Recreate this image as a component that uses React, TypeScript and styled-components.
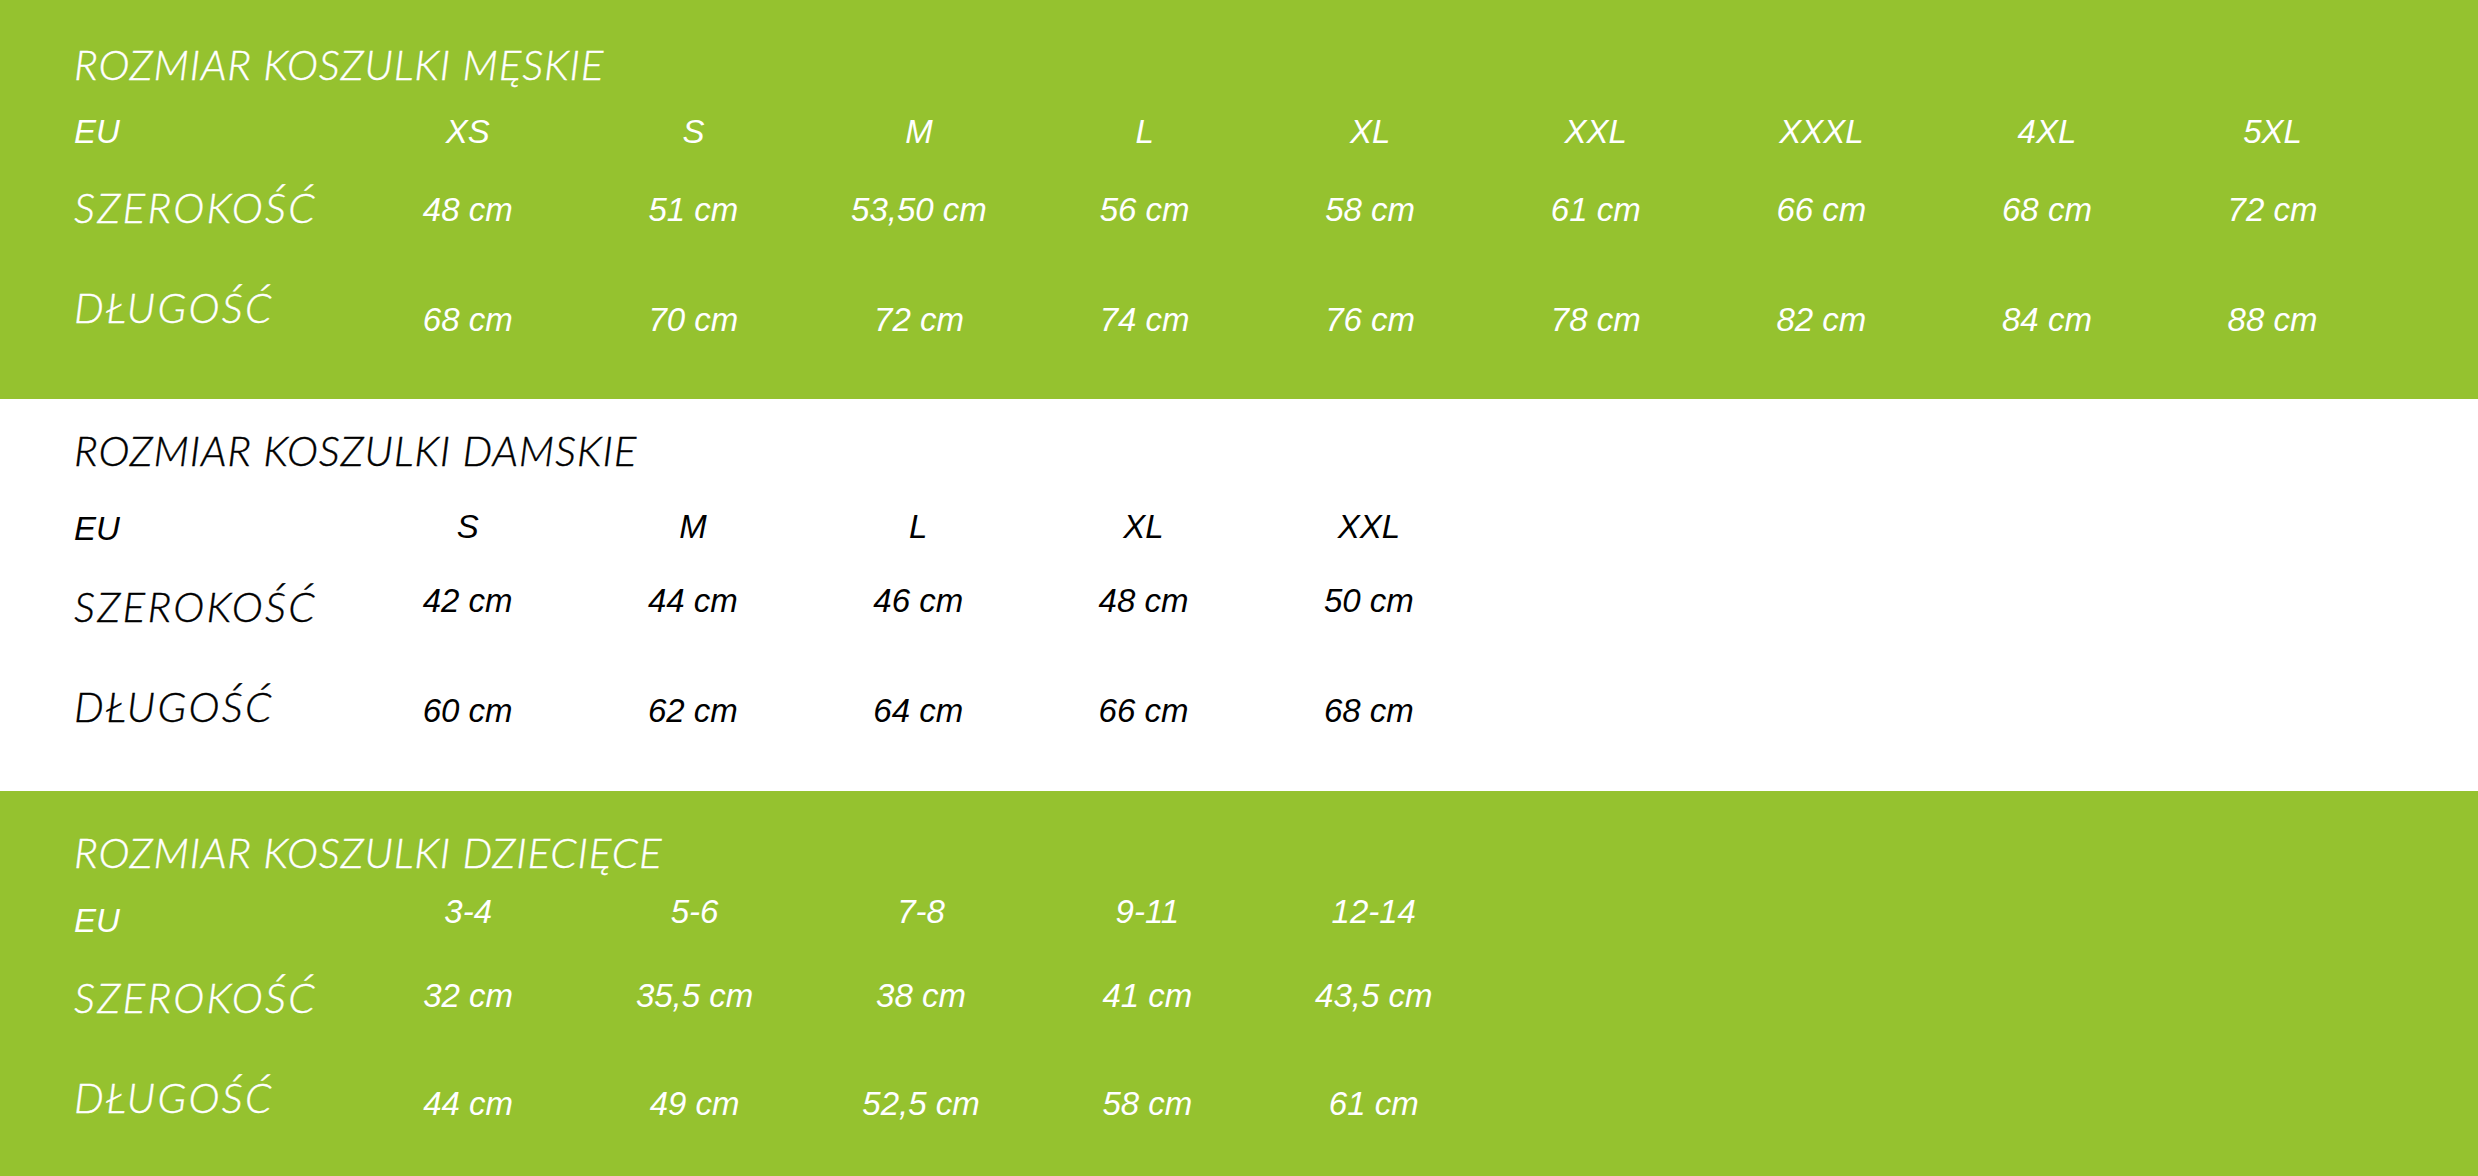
import React from "react";
import styled, { createGlobalStyle } from "styled-components";

const GREEN = "#95c22f";

const GlobalStyle = createGlobalStyle`
  html, body { margin: 0; padding: 0; background: #ffffff; }
  #root { width: 100%; }
`;

const VAL_F = 33;
const VAL_K = 0.8465 * VAL_F;
const LAB_F = 42;
const LAB_K = 0.887 * LAB_F;
const TITLE_F = 42;
const TITLE_K = 0.887 * TITLE_F;

const Section = styled.section<{ $green: boolean; $h: number; $colW: number; $n: number }>`
  box-sizing: border-box;
  width: 100%;
  height: ${(p) => p.$h}px;
  background: ${(p) => (p.$green ? GREEN : "#ffffff")};
  color: ${(p) => (p.$green ? "#ffffff" : "#000000")};
  padding-left: 74px;
  display: grid;
  grid-template-columns: 281px repeat(${(p) => p.$n}, ${(p) => p.$colW}px);
  grid-template-rows: 100px 70px 100px 1fr;
  align-items: start;
  overflow: hidden;
`;

const Title = styled.h2<{ $base: number }>`
  grid-column: 1 / -1;
  margin: 0;
  padding-top: ${(p) => p.$base - TITLE_K}px;
  font-family: "Lato", "Open Sans", sans-serif;
  font-weight: 300;
  font-style: italic;
  font-size: ${TITLE_F}px;
  line-height: ${TITLE_F}px;
  letter-spacing: 0.85px;
  -webkit-text-stroke: 0.4px currentColor;
  white-space: nowrap;
`;

const RowLabel = styled.div<{ $base: number }>`
  padding-top: ${(p) => p.$base - LAB_K}px;
  font-family: "Lato", "Open Sans", sans-serif;
  font-weight: 300;
  font-style: italic;
  font-size: ${LAB_F}px;
  line-height: ${LAB_F}px;
  letter-spacing: 2.3px;
  -webkit-text-stroke: 0.4px currentColor;
  white-space: nowrap;
`;

const EuLabel = styled.div<{ $base: number }>`
  padding-top: ${(p) => p.$base - VAL_K}px;
  font-family: "Liberation Sans", Arial, sans-serif;
  font-style: italic;
  font-size: ${VAL_F}px;
  line-height: ${VAL_F}px;
  white-space: nowrap;
`;

const Cell = styled.div<{ $base: number }>`
  padding-top: ${(p) => p.$base - VAL_K}px;
  font-family: "Liberation Sans", Arial, sans-serif;
  font-style: italic;
  font-size: ${VAL_F}px;
  line-height: ${VAL_F}px;
  text-align: center;
  white-space: nowrap;
`;

type Spec = {
  green: boolean;
  title: string;
  sizes: string[];
  widths: string[];
  lengths: string[];
  colW: number;
  height: number;
  b: { title: number; euH: number; valH: number; r2L: number; r2V: number; r3L: number; r3V: number };
};

const specs: Spec[] = [
  {
    green: true,
    title: "ROZMIAR KOSZULKI MĘSKIE",
    sizes: ["XS", "S", "M", "L", "XL", "XXL", "XXXL", "4XL", "5XL"],
    widths: ["48 cm", "51 cm", "53,50 cm", "56 cm", "58 cm", "61 cm", "66 cm", "68 cm", "72 cm"],
    lengths: ["68 cm", "70 cm", "72 cm", "74 cm", "76 cm", "78 cm", "82 cm", "84 cm", "88 cm"],
    colW: 225.6,
    height: 399,
    b: { title: 80, euH: 43, valH: 43, r2L: 53, r2V: 51, r3L: 53, r3V: 61 },
  },
  {
    green: false,
    title: "ROZMIAR KOSZULKI DAMSKIE",
    sizes: ["S", "M", "L", "XL", "XXL"],
    widths: ["42 cm", "44 cm", "46 cm", "48 cm", "50 cm"],
    lengths: ["60 cm", "62 cm", "64 cm", "66 cm", "68 cm"],
    colW: 225.3,
    height: 392,
    b: { title: 67, euH: 41, valH: 39, r2L: 53, r2V: 43, r3L: 53, r3V: 53 },
  },
  {
    green: true,
    title: "ROZMIAR KOSZULKI DZIECIĘCE",
    sizes: ["3-4", "5-6", "7-8", "9-11", "12-14"],
    widths: ["32 cm", "35,5 cm", "38 cm", "41 cm", "43,5 cm"],
    lengths: ["44 cm", "49 cm", "52,5 cm", "58 cm", "61 cm"],
    colW: 226.4,
    height: 385,
    b: { title: 77, euH: 41, valH: 32, r2L: 52, r2V: 46, r3L: 52, r3V: 54 },
  },
];

const SizeTable: React.FC<{ s: Spec }> = ({ s }) => (
  <Section $green={s.green} $h={s.height} $colW={s.colW} $n={s.sizes.length}>
    <Title $base={s.b.title}>{s.title}</Title>
    <EuLabel $base={s.b.euH}>EU</EuLabel>
    {s.sizes.map((v) => (
      <Cell key={"h" + v} $base={s.b.valH}>
        {v}
      </Cell>
    ))}
    <RowLabel $base={s.b.r2L}>SZEROKOŚĆ</RowLabel>
    {s.widths.map((v, i) => (
      <Cell key={"w" + i} $base={s.b.r2V}>
        {v}
      </Cell>
    ))}
    <RowLabel $base={s.b.r3L}>DŁUGOŚĆ</RowLabel>
    {s.lengths.map((v, i) => (
      <Cell key={"l" + i} $base={s.b.r3V}>
        {v}
      </Cell>
    ))}
  </Section>
);

export default function App() {
  return (
    <>
      <GlobalStyle />
      {specs.map((s) => (
        <SizeTable key={s.title} s={s} />
      ))}
    </>
  );
}
